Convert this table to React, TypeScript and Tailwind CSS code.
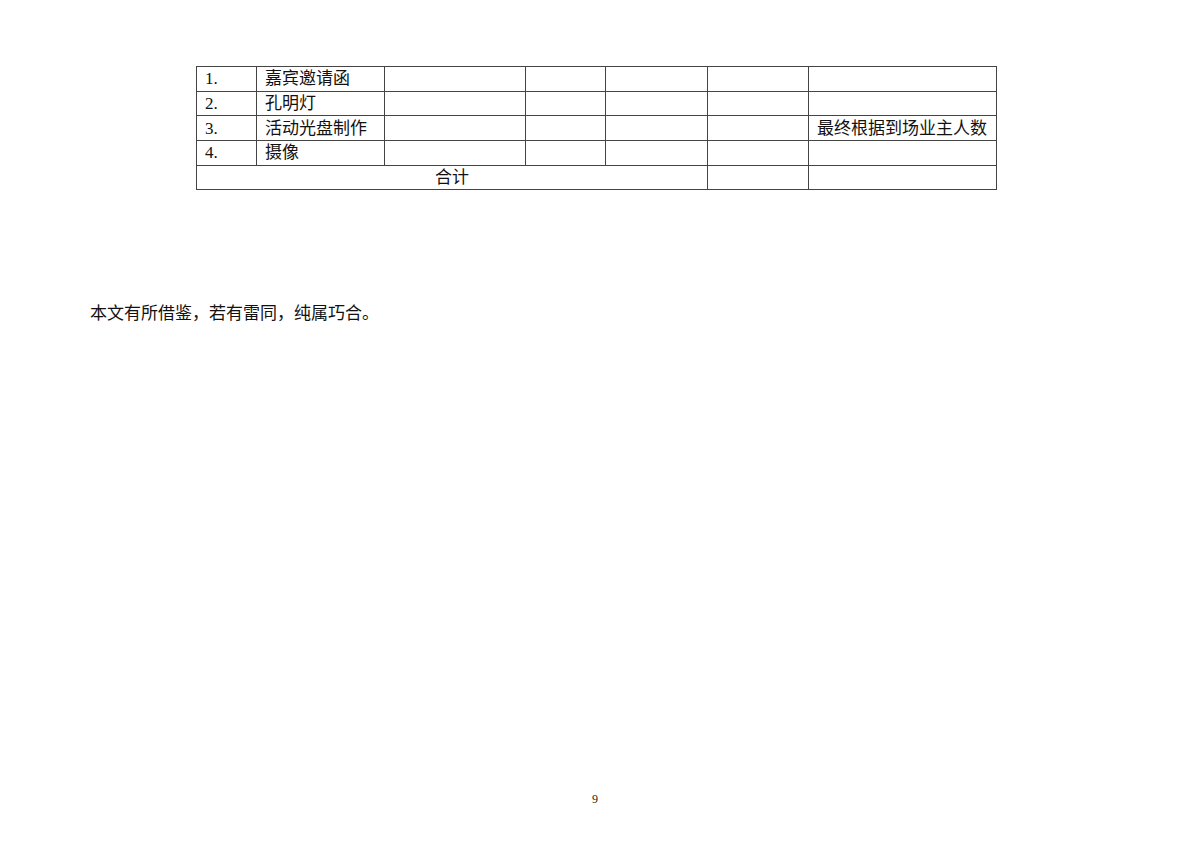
import React from "react";

const rows = [
  { no: "1.", name: "嘉宾邀请函", note: "" },
  { no: "2.", name: "孔明灯", note: "" },
  { no: "3.", name: "活动光盘制作", note: "最终根据到场业主人数" },
  { no: "4.", name: "摄像", note: "" },
];

const cell = "border border-[#444] px-[8px] h-[24.7px] leading-[23px] p-0";

const App = () => {
  return (
    <div
      className="w-[1200px] h-[849px] bg-white text-[#111] overflow-hidden"
      style={{ fontFamily: '"Liberation Serif", "Noto Sans CJK SC", serif' }}
    >
      <div className="pt-[66px] pl-[196px]">
        <table className="border-collapse w-[800px] table-fixed text-[17px]">
          <colgroup>
            <col className="w-[60px]" />
            <col className="w-[128px]" />
            <col className="w-[141px]" />
            <col className="w-[80px]" />
            <col className="w-[102px]" />
            <col className="w-[101px]" />
            <col className="w-[188px]" />
          </colgroup>
          <tbody>
            {rows.map((r) => (
              <tr key={r.no}>
                <td className={`${cell} pl-[8px]`}>{r.no}</td>
                <td className={cell}>{r.name}</td>
                <td className={cell}></td>
                <td className={cell}></td>
                <td className={cell}></td>
                <td className={cell}></td>
                <td className={`${cell} whitespace-nowrap`}>{r.note}</td>
              </tr>
            ))}
            <tr>
              <td colSpan={5} className={`${cell} text-center`}>
                合计
              </td>
              <td className={cell}></td>
              <td className={cell}></td>
            </tr>
          </tbody>
        </table>
      </div>

      {/* closing note */}
      <p className="mt-[112px] pl-[90px] text-[17px] leading-[24px]">
        本文有所借鉴，若有雷同，纯属巧合。
      </p>

      {/* page number */}
      <div className="mt-[465px] text-center text-[12px] leading-[16px] pr-[10px] text-[#222]">9</div>
    </div>
  );
};

export default App;
